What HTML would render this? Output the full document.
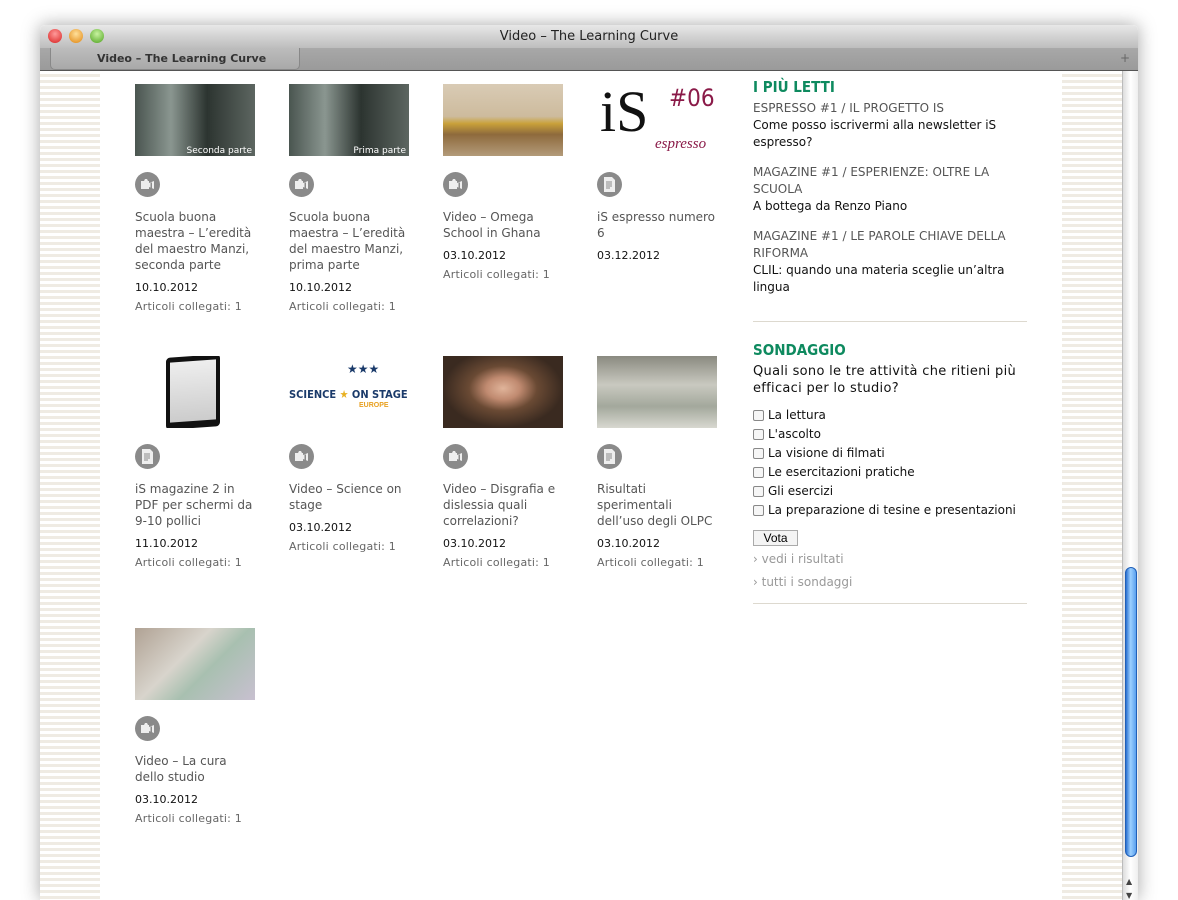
<!DOCTYPE html>
<html><head><meta charset="utf-8"><style>
*{margin:0;padding:0;box-sizing:border-box}
html{width:1178px;height:900px;overflow:hidden}
body{width:1178px;height:900px;background:#fff;position:relative;overflow:hidden;font-family:"DejaVu Sans","Liberation Sans",sans-serif}
.win{position:absolute;left:40px;top:25px;width:1098px;height:875px;background:#fff;box-shadow:0 0 18px rgba(0,0,0,.35);border-radius:5px 5px 0 0;overflow:hidden}
.tb{position:absolute;left:0;top:0;width:1098px;height:23px;background:linear-gradient(#e8e8e8,#bdbdbd);border-radius:5px 5px 0 0;text-align:center;font:13px "DejaVu Sans",sans-serif;line-height:23px;color:#222}
.dot{position:absolute;top:4px;width:14px;height:14px;border-radius:50%}
.tabs{position:absolute;left:0;top:23px;width:1098px;height:23px;background:linear-gradient(#a8a8a8,#9a9a9a);border-bottom:1px solid #555}
.tab{position:absolute;left:10px;top:0;width:250px;height:22px;background:linear-gradient(#bcbcbc,#a9a9a9);border:1px solid #888;border-top:none;border-radius:0 0 5px 5px;font:bold 11px "DejaVu Sans",sans-serif;color:#333;padding-left:46px;line-height:21px}
.stripe{position:absolute;top:46px;width:60px;height:830px;background:repeating-linear-gradient(#fff 0,#fff 3px,#efebe3 3px,#efebe3 6px)}
.sb{position:absolute;left:1082px;top:46px;width:16px;height:830px;background:linear-gradient(90deg,#ddd,#fff 50%,#eee);border-left:1px solid #bbb}
.thumb{position:absolute;left:1085px;top:542px;width:12px;height:290px;border-radius:6px;background:linear-gradient(90deg,#2a6fd0,#9cd0ff 45%,#5aa0ee);border:1px solid #1f5fb8}
.it{position:absolute;width:122px}
.im{width:120px;height:72px;position:relative;overflow:hidden}
.ic{width:25px;height:25px;border-radius:50%;background:#8a8a8a;margin-top:16px;position:relative}
.ic svg{position:absolute;left:0;top:0}
.t{font-size:12px;color:#555;line-height:16px;margin-top:12px}
.d{font-size:11px;color:#111;margin-top:8px;line-height:14px}
.a{font-size:11px;color:#666;margin-top:5px;line-height:14px;letter-spacing:.2px}
.side{position:absolute;left:753px;top:78px;width:274px;font-size:12px;line-height:17px}
h3{font:bold 15px "DejaVu Sans Condensed","DejaVu Sans",sans-serif;color:#0e8a5f;line-height:18px}
.cat{color:#555}
.lk{color:#111}
.hr{border-top:1px solid #ddd9cf;margin-top:17px}
.cb{display:block;line-height:19px;color:#111}
.cb i{display:inline-block;width:11px;height:11px;border:1px solid #888;border-radius:2px;vertical-align:-2px;margin-right:4px;background:#f6f6f6}
.gr{color:#999}
</style></head><body>
<svg width="0" height="0" style="position:absolute"><defs>
<g id="cam"><path d="M6 9h3l1-2h2l1 2h1v8H6z M14 11l5-2v8l-5-2z" fill="#eee"/><rect x="15.5" y="10.5" width="1.5" height="6" fill="#8a8a8a"/></g>
<g id="doc"><path d="M7 5h8l3 3v12H7z" fill="#eee"/><path d="M9 10h6M9 12h6M9 14h6M9 16h4" stroke="#8a8a8a" stroke-width="1"/></g>
</defs></svg>
<div class="win">
<div class="tb">Video – The Learning Curve
<div class="dot" style="left:8px;background:radial-gradient(circle at 50% 35%,#ff9a9a,#d8201f)"></div>
<div class="dot" style="left:29px;background:radial-gradient(circle at 50% 35%,#ffe09a,#e0850f)"></div>
<div class="dot" style="left:50px;background:radial-gradient(circle at 50% 35%,#c8f3a0,#4ea21e)"></div>
</div>
<div class="tabs"><div class="tab">Video – The Learning Curve</div><div style="position:absolute;right:8px;top:3px;color:#666;font-size:12px">+</div></div>
<div class="stripe" style="left:0"></div>
<div class="stripe" style="left:1022px"></div>
<div class="sb"></div><div class="thumb"></div>
<div style="position:absolute;left:1086px;top:852px;font-size:8px;color:#444">▲</div>
<div style="position:absolute;left:1086px;top:866px;font-size:8px;color:#444">▼</div>
</div>

<div class="it" style="left:135px;top:84px"><div class="im" style="background:linear-gradient(90deg,#4a5550,#8a9690 30%,#2c3430 60%,#5d6661)"><span style="position:absolute;right:3px;bottom:0;font-size:9px;color:#fff">Seconda parte</span></div><div class="ic"><svg width="25" height="25"><use href="#cam"/></svg></div><div class="t">Scuola buona maestra – L’eredità del maestro Manzi, seconda parte</div><div class="d">10.10.2012</div><div class="a">Articoli collegati: 1</div></div>
<div class="it" style="left:289px;top:84px"><div class="im" style="background:linear-gradient(90deg,#4a5550,#8a9690 30%,#2c3430 60%,#5d6661)"><span style="position:absolute;right:3px;bottom:0;font-size:9px;color:#fff">Prima parte</span></div><div class="ic"><svg width="25" height="25"><use href="#cam"/></svg></div><div class="t">Scuola buona maestra – L’eredità del maestro Manzi, prima parte</div><div class="d">10.10.2012</div><div class="a">Articoli collegati: 1</div></div>
<div class="it" style="left:443px;top:84px"><div class="im" style="background:linear-gradient(#d9cbb5 0,#cdbb9d 45%,#c9a13a 55%,#8e6a3c 70%,#b39b7a)"></div><div class="ic"><svg width="25" height="25"><use href="#cam"/></svg></div><div class="t">Video – Omega School in Ghana</div><div class="d">03.10.2012</div><div class="a">Articoli collegati: 1</div></div>
<div class="it" style="left:597px;top:84px"><div class="im" style="background:#fff"><span style="position:absolute;left:3px;top:-6px;font:58px 'Liberation Serif',serif;color:#111">iS</span><span style="position:absolute;left:72px;top:0;font:24px 'DejaVu Sans Condensed',sans-serif;color:#8a1a48">#06</span><span style="position:absolute;left:58px;top:52px;font:italic 15px 'Liberation Serif',serif;color:#8a1a48">espresso</span></div><div class="ic"><svg width="25" height="25"><use href="#doc"/></svg></div><div class="t">iS espresso numero 6</div><div class="d">03.12.2012</div></div>

<div class="it" style="left:135px;top:356px"><div class="im" style="background:#fff"><div style="position:absolute;left:31px;top:0;width:54px;height:72px;background:#111;border-radius:4px;transform:skewY(-4deg)"><div style="margin:5px 4px;height:60px;background:linear-gradient(#eee,#ccc)"></div></div></div><div class="ic"><svg width="25" height="25"><use href="#doc"/></svg></div><div class="t">iS magazine 2 in PDF per schermi da 9-10 pollici</div><div class="d">11.10.2012</div><div class="a">Articoli collegati: 1</div></div>
<div class="it" style="left:289px;top:356px"><div class="im" style="background:#fff"><span style="position:absolute;left:0;top:32px;font:bold 11px 'DejaVu Sans Condensed',sans-serif;color:#1a3a6a">SCIENCE <span style="color:#e8b020">★</span> ON STAGE</span><span style="position:absolute;left:70px;top:46px;font:bold 7px sans-serif;color:#e8a020">EUROPE</span><span style="position:absolute;left:58px;top:6px;font-size:12px;color:#1a3a6a">★★★</span></div><div class="ic"><svg width="25" height="25"><use href="#cam"/></svg></div><div class="t">Video – Science on stage</div><div class="d">03.10.2012</div><div class="a">Articoli collegati: 1</div></div>
<div class="it" style="left:443px;top:356px"><div class="im" style="background:radial-gradient(ellipse at 50% 45%,#e0b49a 0,#c08a70 20%,#6a4a34 40%,#3a2a20 70%)"></div><div class="ic"><svg width="25" height="25"><use href="#cam"/></svg></div><div class="t">Video – Disgrafia e dislessia quali correlazioni?</div><div class="d">03.10.2012</div><div class="a">Articoli collegati: 1</div></div>
<div class="it" style="left:597px;top:356px"><div class="im" style="background:linear-gradient(#8a8a80,#c9c9c0 40%,#a3a89c 70%,#d8d8d0)"></div><div class="ic"><svg width="25" height="25"><use href="#doc"/></svg></div><div class="t">Risultati sperimentali dell’uso degli OLPC</div><div class="d">03.10.2012</div><div class="a">Articoli collegati: 1</div></div>

<div class="it" style="left:135px;top:628px;width:118px"><div class="im" style="background:linear-gradient(135deg,#b0a294,#d8d4cc 40%,#a8c0b0 60%,#c8c0d0)"></div><div class="ic"><svg width="25" height="25"><use href="#cam"/></svg></div><div class="t">Video – La cura dello studio</div><div class="d">03.10.2012</div><div class="a">Articoli collegati: 1</div></div>

<div class="side">
<h3>I PIÙ LETTI</h3>
<div class="cat" style="margin-top:4px">ESPRESSO #1 / IL PROGETTO IS</div>
<div class="lk">Come posso iscrivermi alla newsletter iS espresso?</div>
<div class="cat" style="margin-top:13px">MAGAZINE #1 / ESPERIENZE: OLTRE LA SCUOLA</div>
<div class="lk">A bottega da Renzo Piano</div>
<div class="cat" style="margin-top:13px">MAGAZINE #1 / LE PAROLE CHIAVE DELLA RIFORMA</div>
<div class="lk">CLIL: quando una materia sceglie un’altra lingua</div>
<div class="hr" style="margin-top:25px"></div>
<h3 style="margin-top:19px">SONDAGGIO</h3>
<div style="font-size:13px;line-height:17px;color:#111;letter-spacing:.3px;margin-top:4px">Quali sono le tre attività che ritieni più efficaci per lo studio?</div>
<div style="margin-top:9px">
<span class="cb"><i></i>La lettura</span><span class="cb"><i></i>L'ascolto</span><span class="cb"><i></i>La visione di filmati</span><span class="cb"><i></i>Le esercitazioni pratiche</span><span class="cb"><i></i>Gli esercizi</span><span class="cb"><i></i>La preparazione di tesine e presentazioni</span>
</div>
<div style="margin-top:10px;width:45px;height:16px;border:1px solid #aaa;background:#f4f4f4;font:12px 'Liberation Sans',sans-serif;text-align:center;line-height:14px">Vota</div>
<div class="gr" style="margin-top:5px">› vedi i risultati</div>
<div class="gr" style="margin-top:6px">› tutti i sondaggi</div>
<div class="hr" style="margin-top:12px"></div>
</div>
</body></html>
